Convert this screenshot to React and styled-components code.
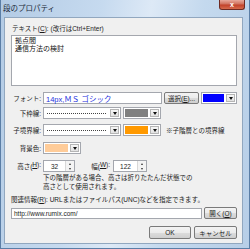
import styled, { createGlobalStyle } from 'styled-components'

const GlobalStyle = createGlobalStyle`
  html, body { margin: 0; padding: 0; }
  body {
    width: 250px;
    height: 249px;
    overflow: hidden;
    font-family: "Liberation Sans", "Noto Sans CJK JP", sans-serif;
    font-size: 6.5px;
    color: #1a1a1a;
  }
  u { text-decoration-thickness: 0.5px; text-underline-offset: 1px; }
`

const Window = styled.div`
  width: 250px;
  height: 249px;
  box-sizing: border-box;
  display: flex;
  flex-direction: column;
  background: linear-gradient(100deg, #b3cbe5 0%, #c6daef 35%, #dde9f6 52%, #c4d9ee 70%, #b7cee7 100%);
  border-left: 1px solid #5b7ea6;
  border-right: 1px solid #5b7ea6;
  border-bottom: 1px solid #5b7ea6;
  padding: 0 6px 4px 3px;
`

const TitleBar = styled.div`
  height: 17px;
  flex: none;
  display: flex;
  justify-content: space-between;
  align-items: flex-start;
`

const Title = styled.span`
  margin: 4px 0 0 -1px;
  font-size: 7.5px;
  line-height: 9px;
  color: #1c2a3a;
`

const CloseButton = styled.div`
  width: 26px;
  height: 10px;
  margin-right: -2px;
  box-sizing: border-box;
  border: 1px solid #6e2a22;
  border-top: none;
  border-radius: 0 0 3px 3px;
  background: linear-gradient(#e8a99c, #d0705c 45%, #c2412a 55%, #d66a4c);
  display: flex;
  align-items: center;
  justify-content: center;
  color: #fff;
  font-size: 7px;
  font-weight: bold;
  line-height: 1;
`

const Client = styled.div`
  flex: 1;
  box-sizing: border-box;
  background: #f0f0f0;
  border: 1px solid #91a7bf;
  padding: 6px 5px 0 6px;
  display: flex;
  flex-direction: column;
`

const Caption = styled.div`
  line-height: 9px;
  height: 9px;
  white-space: nowrap;
  padding-left: ${(p) => p.indent || 0}px;
  margin-top: ${(p) => p.top || 0}px;
`

const TextArea = styled.div`
  margin-top: 2px;
  height: 51px;
  box-sizing: border-box;
  background: #fff;
  border: 1px solid #a4a7ae;
  padding: 1px 3px;
  font-size: 7px;
  line-height: 7.5px;
  color: #111;
`

const FormRows = styled.div`
  margin-top: 6px;
  display: flex;
  flex-direction: column;
  gap: 5px;
`

const Row = styled.div`
  display: flex;
  align-items: center;
  height: 12px;
  margin-top: ${(p) => p.before || 0}px;
  margin-bottom: ${(p) => p.after || 0}px;
`

const Label = styled.div`
  width: ${(p) => p.w || 30}px;
  flex: none;
  display: flex;
  justify-content: flex-end;
  white-space: nowrap;
  margin-right: ${(p) => p.space || 2}px;
`

const FontField = styled.div`
  width: 120px;
  height: 12px;
  box-sizing: border-box;
  background: #fff;
  border: 1px solid #a4a7ae;
  padding-left: 2px;
  display: flex;
  align-items: center;
  color: #2530e0;
  font-size: 7.5px;
  white-space: nowrap;
`

const Button = styled.div`
  width: ${(p) => p.w}px;
  height: ${(p) => p.h || 12}px;
  margin-left: ${(p) => p.ml || 0}px;
  box-sizing: border-box;
  border: 1px solid #7a7a7a;
  border-radius: 2px;
  background: linear-gradient(#f3f3f3, #ebebeb 50%, #dcdcdc 51%, #cfcfcf);
  display: flex;
  align-items: center;
  justify-content: center;
  white-space: nowrap;
`

const Combo = styled.div`
  width: ${(p) => p.w}px;
  height: 12px;
  margin-left: ${(p) => p.ml || 0}px;
  box-sizing: border-box;
  background: #fff;
  border: 1px solid #a4a7ae;
  display: flex;
  align-items: stretch;
  flex: none;
`

const ComboBody = styled.div`
  flex: 1;
  display: flex;
  align-items: center;
  padding: 0 3px;
`

const DottedLine = styled.div`
  flex: 1;
  border-top: 1px dotted #444;
`

const Swatch = styled.div`
  flex: 1;
  margin: 1px;
  background: ${(p) => p.color};
`

const DropArrow = styled.div`
  width: 7px;
  flex: none;
  margin: 1px;
  border: 1px solid #b5b5b5;
  background: linear-gradient(#f6f6f6, #e2e2e2);
  display: flex;
  align-items: center;
  justify-content: center;
  &::after {
    content: '';
    border-left: 2px solid transparent;
    border-right: 2px solid transparent;
    border-top: 3px solid #111;
  }
`

const Note = styled.span`
  margin-left: 5px;
  white-space: nowrap;
`

const Spinner = styled.div`
  width: ${(p) => p.w}px;
  height: 12px;
  box-sizing: border-box;
  background: #fff;
  border: 1px solid #a4a7ae;
  display: flex;
  flex: none;
`

const SpinValue = styled.div`
  flex: 1;
  display: flex;
  align-items: center;
  justify-content: center;
  font-size: 6.5px;
`

const SpinButtons = styled.div`
  width: 8px;
  display: flex;
  flex-direction: column;
  border-left: 1px solid #d8d8d8;
`

const SpinPart = styled.div`
  flex: 1;
  display: flex;
  align-items: center;
  justify-content: center;
  background: #f4f4f4;
  &::after {
    content: '';
    border-left: 1.5px solid transparent;
    border-right: 1.5px solid transparent;
    ${(p) => (p.up ? 'border-bottom: 2px solid #333;' : 'border-top: 2px solid #333;')}
  }
`

const Hint = styled.div`
  margin: 1px 0 0 32px;
  line-height: 9px;
`

const LinkRow = styled.div`
  margin-top: 3px;
  display: flex;
  align-items: center;
  height: 12px;
`

const Input = styled.div`
  flex: 1;
  height: 11px;
  box-sizing: border-box;
  background: #fff;
  border: 1px solid #a4a7ae;
  padding-left: 2px;
  display: flex;
  align-items: center;
  font-size: 6.5px;
  color: #222;
`

const Footer = styled.div`
  margin-top: 7px;
  display: flex;
  justify-content: flex-end;
  gap: 3px;
`

function LineCombo({ color }) {
  return (
    <>
      <Combo w={78}>
        <ComboBody>
          <DottedLine />
        </ComboBody>
        <DropArrow />
      </Combo>
      <Combo w={38} ml={2}>
        <Swatch color={color} />
        <DropArrow />
      </Combo>
    </>
  )
}

function SpinBox({ value, w }) {
  return (
    <Spinner w={w}>
      <SpinValue>{value}</SpinValue>
      <SpinButtons>
        <SpinPart up />
        <SpinPart />
      </SpinButtons>
    </Spinner>
  )
}

export default function App() {
  return (
    <>
      <GlobalStyle />
      <Window>
        <TitleBar>
          <Title>段のプロパティ</Title>
          <CloseButton>x</CloseButton>
        </TitleBar>
        <Client>
          <Caption indent={1}>
            テキスト(<u>C</u>): (改行はCtrl+Enter)
          </Caption>
          <TextArea>
            拠点間
            <br />
            通信方法の検討
          </TextArea>
          <FormRows>
            <Row after={-2}>
              <Label>フォント:</Label>
              <FontField>14px,ＭＳ ゴシック</FontField>
              <Button w={35} ml={2}>
                選択(<u>E</u>)...
              </Button>
              <Combo w={36} ml={2}>
                <Swatch color="#0000ff" />
                <DropArrow />
              </Combo>
            </Row>
            <Row>
              <Label>下枠線:</Label>
              <LineCombo color="#808080" />
            </Row>
            <Row>
              <Label>子境界線:</Label>
              <LineCombo color="#ff9900" />
              <Note>※子階層との境界線</Note>
            </Row>
            <Row before={1}>
              <Label>背景色:</Label>
              <Combo w={38}>
                <Swatch color="#ffcc99" />
                <DropArrow />
              </Combo>
            </Row>
            <Row before={1}>
              <Label>
                高さ(<u>H</u>):
              </Label>
              <SpinBox value="32" w={32} />
              <Label w={35} space={3}>
                幅(<u>W</u>):
              </Label>
              <SpinBox value="122" w={34} />
            </Row>
          </FormRows>
          <Hint>
            下の階層がある場合、高さは折りたたんだ状態での
            <br />
            高さとして使用されます。
          </Hint>
          <Caption top={4}>
            関連情報(<u>R</u>): URLまたはファイルパス(UNC)などを指定できます。
          </Caption>
          <LinkRow>
            <Input>http://www.rumix.com/</Input>
            <Button w={33} ml={2}>
              開く(<u>O</u>)
            </Button>
          </LinkRow>
          <Footer>
            <Button w={42} h={13}>
              OK
            </Button>
            <Button w={43} h={13}>
              キャンセル
            </Button>
          </Footer>
        </Client>
      </Window>
    </>
  )
}
